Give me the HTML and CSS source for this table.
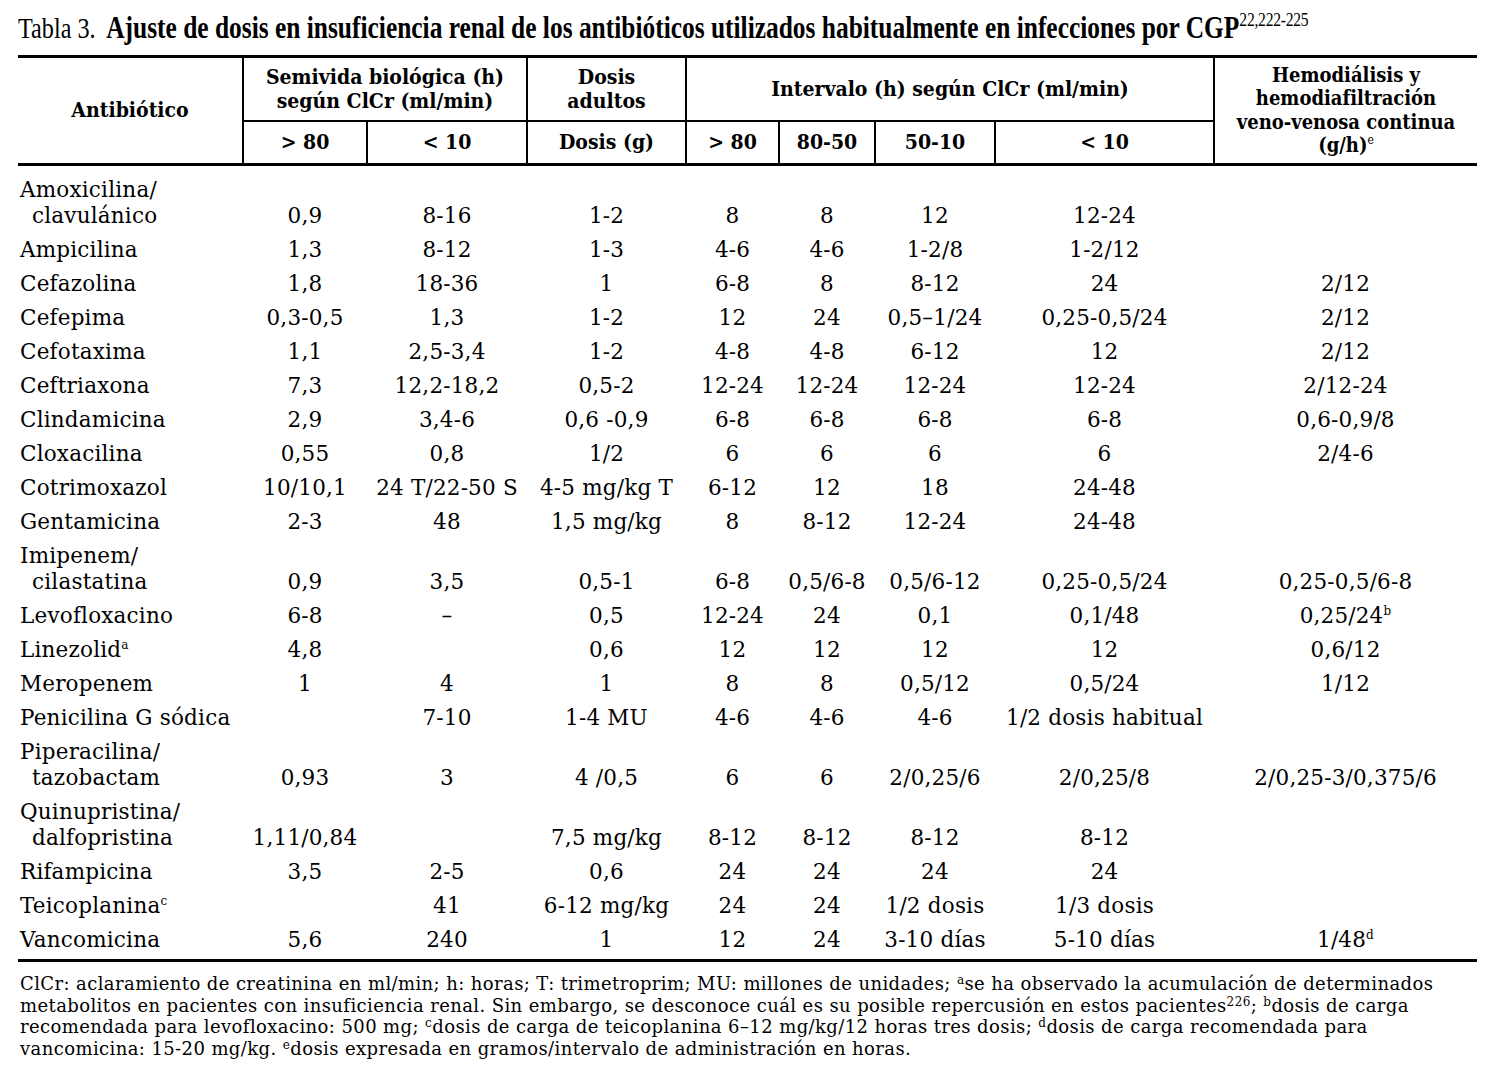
FILE: index.html
```html
<!DOCTYPE html>
<html lang="es">
<head>
<meta charset="utf-8">
<title>Tabla 3</title>
<link rel="stylesheet" href="styles.css">
</head>
<body>
<div class="page">
  <div class="title"><span class="title-inner"><span class="lbl">Tabla 3.</span><b class="ttl">Ajuste de dosis en insuficiencia renal de los antibióticos utilizados habitualmente en infecciones por CGP</b><sup>22,222-225</sup></span></div>
  <table class="t">
    <colgroup>
      <col class="w1"><col class="w2"><col class="w3"><col class="w4"><col class="w5"><col class="w6"><col class="w7"><col class="w8"><col class="w9">
    </colgroup>
    <thead>
      <tr class="h1">
        <th rowspan="2" class="first">Antibiótico</th>
        <th colspan="2">Semivida biológica (h)<br>según ClCr (ml/min)</th>
        <th>Dosis<br>adultos</th>
        <th colspan="4">Intervalo (h) según ClCr (ml/min)</th>
        <th rowspan="2" class="hemo">Hemodiálisis y<br>hemodiafiltración<br>veno-venosa continua<br>(g/h)<sup>e</sup></th>
      </tr>
      <tr class="h2">
        <th>&gt; 80</th><th>&lt; 10</th><th>Dosis (g)</th><th>&gt; 80</th><th>80-50</th><th>50-10</th><th>&lt; 10</th>
      </tr>
    </thead>
    <tbody>
      <tr class="r-first"><td class="name">Amoxicilina/<br>clavulánico</td><td>0,9</td><td>8-16</td><td>1-2</td><td>8</td><td>8</td><td>12</td><td>12-24</td><td></td></tr>
      <tr><td class="name">Ampicilina</td><td>1,3</td><td>8-12</td><td>1-3</td><td>4-6</td><td>4-6</td><td>1-2/8</td><td>1-2/12</td><td></td></tr>
      <tr><td class="name">Cefazolina</td><td>1,8</td><td>18-36</td><td>1</td><td>6-8</td><td>8</td><td>8-12</td><td>24</td><td>2/12</td></tr>
      <tr><td class="name">Cefepima</td><td>0,3-0,5</td><td>1,3</td><td>1-2</td><td>12</td><td>24</td><td>0,5–1/24</td><td>0,25-0,5/24</td><td>2/12</td></tr>
      <tr><td class="name">Cefotaxima</td><td>1,1</td><td>2,5-3,4</td><td>1-2</td><td>4-8</td><td>4-8</td><td>6-12</td><td>12</td><td>2/12</td></tr>
      <tr><td class="name">Ceftriaxona</td><td>7,3</td><td>12,2-18,2</td><td>0,5-2</td><td>12-24</td><td>12-24</td><td>12-24</td><td>12-24</td><td>2/12-24</td></tr>
      <tr><td class="name">Clindamicina</td><td>2,9</td><td>3,4-6</td><td>0,6 -0,9</td><td>6-8</td><td>6-8</td><td>6-8</td><td>6-8</td><td>0,6-0,9/8</td></tr>
      <tr><td class="name">Cloxacilina</td><td>0,55</td><td>0,8</td><td>1/2</td><td>6</td><td>6</td><td>6</td><td>6</td><td>2/4-6</td></tr>
      <tr><td class="name">Cotrimoxazol</td><td>10/10,1</td><td>24 T/22-50 S</td><td>4-5 mg/kg T</td><td>6-12</td><td>12</td><td>18</td><td>24-48</td><td></td></tr>
      <tr><td class="name">Gentamicina</td><td>2-3</td><td>48</td><td>1,5 mg/kg</td><td>8</td><td>8-12</td><td>12-24</td><td>24-48</td><td></td></tr>
      <tr><td class="name">Imipenem/<br>cilastatina</td><td>0,9</td><td>3,5</td><td>0,5-1</td><td>6-8</td><td>0,5/6-8</td><td>0,5/6-12</td><td>0,25-0,5/24</td><td>0,25-0,5/6-8</td></tr>
      <tr><td class="name">Levofloxacino</td><td>6-8</td><td>–</td><td>0,5</td><td>12-24</td><td>24</td><td>0,1</td><td>0,1/48</td><td>0,25/24<sup>b</sup></td></tr>
      <tr><td class="name">Linezolid<sup>a</sup></td><td>4,8</td><td></td><td>0,6</td><td>12</td><td>12</td><td>12</td><td>12</td><td>0,6/12</td></tr>
      <tr><td class="name">Meropenem</td><td>1</td><td>4</td><td>1</td><td>8</td><td>8</td><td>0,5/12</td><td>0,5/24</td><td>1/12</td></tr>
      <tr><td class="name">Penicilina G sódica</td><td></td><td>7-10</td><td>1-4 MU</td><td>4-6</td><td>4-6</td><td>4-6</td><td>1/2 dosis habitual</td><td></td></tr>
      <tr><td class="name">Piperacilina/<br>tazobactam</td><td>0,93</td><td>3</td><td>4 /0,5</td><td>6</td><td>6</td><td>2/0,25/6</td><td>2/0,25/8</td><td>2/0,25-3/0,375/6</td></tr>
      <tr><td class="name">Quinupristina/<br>dalfopristina</td><td>1,11/0,84</td><td></td><td>7,5 mg/kg</td><td>8-12</td><td>8-12</td><td>8-12</td><td>8-12</td><td></td></tr>
      <tr><td class="name">Rifampicina</td><td>3,5</td><td>2-5</td><td>0,6</td><td>24</td><td>24</td><td>24</td><td>24</td><td></td></tr>
      <tr><td class="name">Teicoplanina<sup>c</sup></td><td></td><td>41</td><td>6-12 mg/kg</td><td>24</td><td>24</td><td>1/2 dosis</td><td>1/3 dosis</td><td></td></tr>
      <tr class="r-last"><td class="name">Vancomicina</td><td>5,6</td><td>240</td><td>1</td><td>12</td><td>24</td><td>3-10 días</td><td>5-10 días</td><td>1/48<sup>d</sup></td></tr>
    </tbody>
  </table>
  <p class="notes">ClCr: aclaramiento de creatinina en ml/min; h: horas; T: trimetroprim; MU: millones de unidades; <sup>a</sup>se ha observado la acumulación de determinados<br>metabolitos en pacientes con insuficiencia renal. Sin embargo, se desconoce cuál es su posible repercusión en estos pacientes<sup>226</sup>; <sup>b</sup>dosis de carga<br>recomendada para levofloxacino: 500 mg; <sup>c</sup>dosis de carga de teicoplanina 6–12 mg/kg/12 horas tres dosis; <sup>d</sup>dosis de carga recomendada para<br>vancomicina: 15-20 mg/kg. <sup>e</sup>dosis expresada en gramos/intervalo de administración en horas.</p>
</div>
</body>
</html>
```

FILE: styles.css
```css
html, body {
  margin: 0;
  padding: 0;
  background: #fff;
  color: #000;
}

.page {
  width: 1459px;
  margin-left: 18px;
  font-family: "DejaVu Serif", "Liberation Serif", serif;
}

.title {
  height: 55px;
  display: flex;
  align-items: center;
  white-space: nowrap;
  overflow: visible;
}

.title-inner {
  display: inline-block;
  font-family: "Liberation Serif", serif;
  transform: scaleX(0.82);
  transform-origin: left center;
  margin-top: 1px;
}

.lbl {
  font-size: 29.5px;
  margin-right: 13px;
}

.ttl {
  font-size: 31px;
  font-weight: bold;
}

.title-inner sup {
  font-size: 19px;
  vertical-align: 12px;
  line-height: 0;
  letter-spacing: -0.3px;
}

.t {
  width: 1459px;
  table-layout: fixed;
  border-collapse: collapse;
  border-top: 3px solid #000;
  border-bottom: 3px solid #000;
}

.w1 { width: 225px; }
.w2 { width: 124px; }
.w3 { width: 160px; }
.w4 { width: 159px; }
.w5 { width: 93px; }
.w6 { width: 96px; }
.w7 { width: 120px; }
.w8 { width: 219px; }
.w9 { width: 263px; }

thead {
  border-bottom: 3px solid #000;
}

th {
  font-family: "DejaVu Serif Condensed", "DejaVu Serif", serif;
  font-stretch: condensed;
  font-weight: bold;
  font-size: 21px;
  line-height: 24.5px;
  text-align: center;
  vertical-align: middle;
  padding: 0;
  border-left: 2px solid #000;
}

th.first {
  border-left: none;
}

.h1 th {
  height: 62px;
}

.h2 th {
  height: 41px;
  border-top: 2px solid #000;
}

th.hemo {
  font-size: 20px;
  line-height: 23.4px;
  padding-bottom: 0;
}

th sup, td sup {
  font-size: 12px;
  vertical-align: 8px;
  line-height: 0;
  font-weight: normal;
}

td {
  font-size: 21.5px;
  letter-spacing: 0.2px;
  line-height: 26px;
  padding: 4px 0;
  text-align: center;
  vertical-align: bottom;
  white-space: nowrap;
}

td.name {
  text-align: left;
  padding-left: 14px;
  text-indent: -12px;
}

.r-first td {
  padding-top: 11px;
}

.r-last td {
  padding-bottom: 6px;
}

.notes {
  margin: 11px 0 0 2px;
  font-size: 18px;
  letter-spacing: 0.4px;
  line-height: 21.5px;
  white-space: nowrap;
}

.notes sup {
  font-size: 12px;
  vertical-align: 6px;
  line-height: 0;
}
```
